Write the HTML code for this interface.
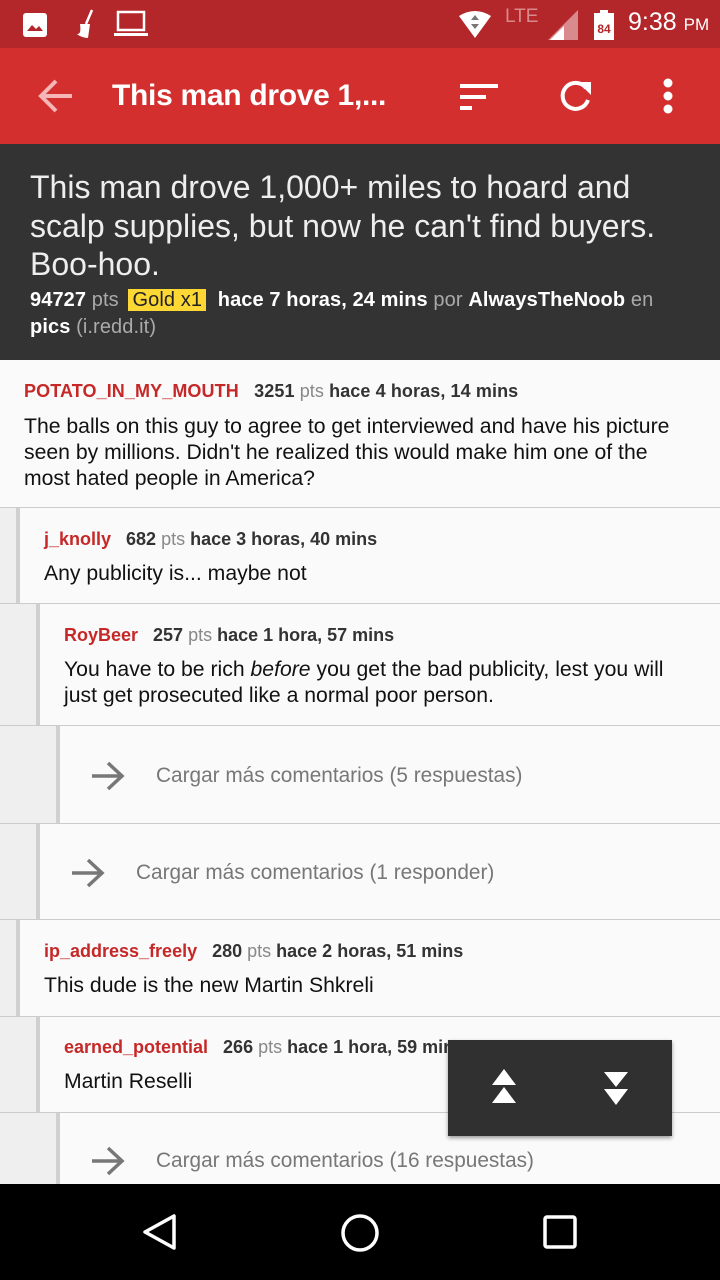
<!DOCTYPE html><html><head><meta charset="utf-8"><style>
*{margin:0;padding:0;box-sizing:border-box}
body{width:720px;height:1280px;overflow:hidden;background:#fafafa;font-family:"Liberation Sans",sans-serif;position:relative}
.abs{position:absolute}
.sb{top:0;left:0;width:720px;height:48px;background:#b3262a;color:#fff}
.tb{top:48px;left:0;width:720px;height:96px;background:#d32f2f;color:#fff}
.ph{top:144px;left:0;width:720px;height:216px;background:#333;color:#fff}
.row{position:absolute;left:0;width:720px;border-bottom:1px solid #ccc;background:#fafafa}
.g{position:absolute;top:0;bottom:0;left:0;background:#efefef}
.g i{position:absolute;top:0;bottom:0;right:0;width:4px;background:#d0d0d0}
.meta{position:absolute;font-size:18px;color:#333;font-weight:bold;white-space:nowrap;letter-spacing:0px}
.meta .u{color:#c62828}.meta .p{color:#888;font-weight:normal}
.txt{position:absolute;font-size:21.2px;color:#111;line-height:26px;white-space:nowrap}
.more{position:absolute;font-size:20.8px;color:#777;white-space:nowrap}
.arr{position:absolute}
</style></head><body>
<div class="abs sb">
<svg class="abs" style="left:22px;top:12px" width="26" height="26"><rect x="1" y="1" width="24" height="24" rx="3" fill="#fff"/><path d="M5 19l5-6 4 4 3-3 4 5z" fill="#b3262a"/></svg>
<svg class="abs" style="left:72px;top:8px" width="26" height="32"><path d="M20 2l-6 14" stroke="#fff" stroke-width="2.5"/><path d="M8 16h10l-2 14c-4 0-9-2-11-4 3 0 4-2 3-10z" fill="#fff"/></svg>
<svg class="abs" style="left:114px;top:10px" width="36" height="28"><rect x="4" y="2" width="26" height="18" fill="none" stroke="#fff" stroke-width="2.5"/><rect x="0" y="23" width="34" height="3" fill="#fff"/></svg>
<svg class="abs" style="left:458px;top:10px" width="34" height="28"><path d="M1 6Q17-4 33 6L17 28z" fill="#fff"/><path d="M13 10l4-5 4 5zM13 14l4 5 4-5z" fill="#777"/></svg>
<div class="abs" style="left:505px;top:6px;font-size:19px;color:#d98a8c">LTE</div>
<svg class="abs" style="left:548px;top:10px" width="32" height="32"><path d="M30 0V30H0z" fill="#d98a8c"/><path d="M16 16V30H2z" fill="#fff"/></svg>
<svg class="abs" style="left:594px;top:10px" width="20" height="30"><rect x="6" y="0" width="8" height="3" fill="#fff"/><rect x="0" y="3" width="20" height="27" fill="#fff"/><text x="10" y="23" font-size="12" font-family="Liberation Sans" font-weight="bold" fill="#b3262a" text-anchor="middle">84</text></svg>
<div class="abs" style="left:628px;top:8px;font-size:25px">9:38 <span style="font-size:17px">PM</span></div>
</div>
<div class="abs tb">
<svg class="abs" style="left:36px;top:30px" width="38" height="36"><path d="M36 18H6M20 3L5 18l15 15" fill="none" stroke="#f4b6b6" stroke-width="4"/></svg>
<div class="abs" style="left:112px;top:31px;font-size:30px;font-weight:bold;letter-spacing:-0.3px">This man drove 1,...</div>
<svg class="abs" style="left:460px;top:34px" width="40" height="30"><rect x="0" y="2" width="38" height="4" fill="#fff"/><rect x="0" y="13" width="26" height="4" fill="#fff"/><rect x="0" y="24" width="12" height="4" fill="#fff"/></svg>
<svg class="abs" style="left:558px;top:30px" width="36" height="36"><path d="M28 10A13 13 0 1 0 30 22" fill="none" stroke="#fff" stroke-width="4"/><path d="M20 4h13v13z" fill="#fff"/></svg>
<svg class="abs" style="left:660px;top:30px" width="16" height="36"><circle cx="8" cy="5" r="4.5" fill="#fff"/><circle cx="8" cy="18" r="4.5" fill="#fff"/><circle cx="8" cy="31" r="4.5" fill="#fff"/></svg>
</div>
<div class="abs ph">
<div class="abs" style="left:30px;top:24px;font-size:32px;line-height:38.5px;color:#eee;white-space:nowrap">This man drove 1,000+ miles to hoard and<br>scalp supplies, but now he can't find buyers.<br>Boo-hoo.</div>
<div class="abs" style="left:30px;top:143px;width:680px;font-size:20px;line-height:27px;color:#fff;letter-spacing:0.1px"><b>94727</b> <span style="color:#aaa">pts</span> <span style="background:#fdd835;color:#222;padding:0 4px;margin:0 6px 0 4px">Gold x1</span> <b>hace 7 horas, 24 mins</b> <span style="color:#aaa">por</span> <b>AlwaysTheNoob</b> <span style="color:#aaa">en</span><br><b>pics</b> <span style="color:#aaa">(i.redd.it)</span></div>
</div>

<div class="row" style="top:360px;height:148px">
<div class="meta" style="left:24px;top:21px;letter-spacing:0.1px"><span class="u">POTATO_IN_MY_MOUTH</span>&nbsp;&nbsp; 3251 <span class="p">pts</span> hace 4 horas, 14 mins</div>
<div class="txt" style="left:24px;top:54px">The balls on this guy to agree to get interviewed and have his picture<br>seen by millions. Didn't he realized this would make him one of the<br>most hated people in America?</div>
</div>
<div class="row" style="top:508px;height:96px"><div class="g" style="width:20px"><i></i></div>
<div class="meta" style="left:44px;top:21px"><span class="u">j_knolly</span>&nbsp;&nbsp; 682 <span class="p">pts</span> hace 3 horas, 40 mins</div>
<div class="txt" style="left:44px;top:53px">Any publicity is... maybe not</div></div>
<div class="row" style="top:604px;height:122px"><div class="g" style="width:40px"><i></i></div>
<div class="meta" style="left:64px;top:21px"><span class="u">RoyBeer</span>&nbsp;&nbsp; 257 <span class="p">pts</span> hace 1 hora, 57 mins</div>
<div class="txt" style="left:64px;top:53px">You have to be rich <i>before</i> you get the bad publicity, lest you will<br>just get prosecuted like a normal poor person.</div></div>
<div class="row" style="top:726px;height:98px"><div class="g" style="width:60px"><i></i></div>
<svg class="arr" style="left:90px;top:34px" width="36" height="32"><path d="M2 16h30M18 3l14 13-14 13" fill="none" stroke="#777" stroke-width="3.5"/></svg>
<div class="more" style="left:156px;top:38px">Cargar más comentarios (5 respuestas)</div></div>
<div class="row" style="top:824px;height:96px"><div class="g" style="width:40px"><i></i></div>
<svg class="arr" style="left:70px;top:33px" width="36" height="32"><path d="M2 16h30M18 3l14 13-14 13" fill="none" stroke="#777" stroke-width="3.5"/></svg>
<div class="more" style="left:136px;top:37px">Cargar más comentarios (1 responder)</div></div>
<div class="row" style="top:920px;height:97px"><div class="g" style="width:20px"><i></i></div>
<div class="meta" style="left:44px;top:21px"><span class="u">ip_address_freely</span>&nbsp;&nbsp; 280 <span class="p">pts</span> hace 2 horas, 51 mins</div>
<div class="txt" style="left:44px;top:53px">This dude is the new Martin Shkreli</div></div>
<div class="row" style="top:1017px;height:96px"><div class="g" style="width:40px"><i></i></div>
<div class="meta" style="left:64px;top:20px"><span class="u">earned_potential</span>&nbsp;&nbsp; 266 <span class="p">pts</span> hace 1 hora, 59 mins</div>
<div class="txt" style="left:64px;top:52px">Martin Reselli</div></div>
<div class="row" style="top:1113px;height:80px;border:none"><div class="g" style="width:60px"><i></i></div>
<svg class="arr" style="left:90px;top:32px" width="36" height="32"><path d="M2 16h30M18 3l14 13-14 13" fill="none" stroke="#777" stroke-width="3.5"/></svg>
<div class="more" style="left:156px;top:36px">Cargar más comentarios (16 respuestas)</div></div>

<div class="abs" style="left:448px;top:1040px;width:224px;height:96px;background:#303030;box-shadow:0 2px 4px rgba(0,0,0,.4)">
<svg class="abs" style="left:42px;top:28px" width="28" height="40"><path d="M14 1L26 17H2zM14 19L26 35H2z" fill="#fff"/></svg>
<svg class="abs" style="left:154px;top:30px" width="28" height="40"><path d="M2 2H26L14 17zM2 19H26L14 35z" fill="#fff"/></svg>
</div>
<div class="abs" style="left:0;top:1184px;width:720px;height:96px;background:#000">
<svg class="abs" style="left:140px;top:28px" width="40" height="40"><path d="M34 4V36L5 20z" fill="none" stroke="#fff" stroke-width="3.5" stroke-linejoin="round"/></svg>
<svg class="abs" style="left:339px;top:28px" width="42" height="42"><circle cx="21" cy="21" r="17" fill="none" stroke="#fff" stroke-width="3.5"/></svg>
<svg class="abs" style="left:542px;top:30px" width="36" height="36"><rect x="3" y="3" width="30" height="30" rx="2" fill="none" stroke="#fff" stroke-width="3.5"/></svg>
</div>
</body></html>
